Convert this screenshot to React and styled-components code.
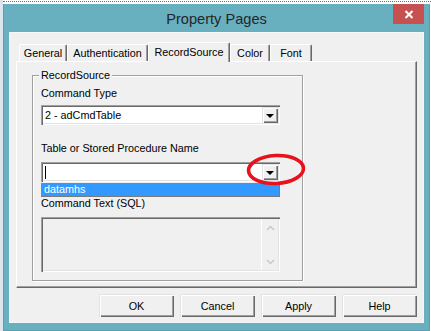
import React from "react";
import styled, { createGlobalStyle } from "styled-components";

const Global = createGlobalStyle`
  html, body { margin: 0; padding: 0; background: #fff; }
  body { font-family: "Liberation Sans", Arial, sans-serif; }
`;

const Page = styled.div`
  width: 431px;
  height: 331px;
  overflow: hidden;
  box-sizing: border-box;
  padding-top: 1px;
  background: linear-gradient(to right, #dde5ee 0, #dde5ee 3px, #fff 3px);
`;

const DottedRule = styled.div`
  height: 0;
  margin-left: 3px;
  border-top: 1px dotted #6d6d6d;
`;

const Window = styled.div`
  margin: 2px 0 0 3px;
  width: 427px;
  height: 327px;
  box-sizing: border-box;
  background: #68afbf;
  border: 1px solid #5c9fae;
  border-top: none;
  display: flex;
  flex-direction: column;
`;

const TitleBar = styled.div`
  height: 28px;
  display: grid;
  grid-template-columns: 1fr auto 1fr;
  align-items: start;
`;

const Title = styled.div`
  grid-column: 2;
  margin-top: 6px;
  font-size: 14.6px;
  line-height: 18px;
  color: #262626;
`;

const CloseButton = styled.div`
  grid-column: 3;
  justify-self: end;
  margin-right: 5px;
  width: 31px;
  height: 20px;
  background: #c75050;
  display: flex;
  align-items: center;
  justify-content: center;
`;

const Client = styled.div`
  margin: 0 5px 0 5px;
  height: 291px;
  box-sizing: border-box;
  background: #f0f0f0;
  border: 1px solid #f7f7f7;
  display: flex;
  flex-direction: column;
`;

const TabRow = styled.div`
  margin-top: 9px;
  padding-left: 9px;
  height: 19px;
  display: flex;
  align-items: flex-end;
  position: relative;
  z-index: 1;
`;

const Tab = styled.div`
  width: ${(p) => p.$w}px;
  height: ${(p) => (p.$active ? 20 : 17)}px;
  margin-bottom: ${(p) => (p.$active ? -1 : 0)}px;
  box-sizing: border-box;
  background: #f0f0f0;
  border-top: 1px solid #fff;
  border-left: 1px solid #fff;
  border-right: 1px solid #696969;
  box-shadow: inset -1px 0 0 #a0a0a0;
  border-radius: 2px 2px 0 0;
  font-size: 10.8px;
  color: #000;
  display: flex;
  align-items: center;
  justify-content: center;
  padding-bottom: ${(p) => (p.$active ? 2 : 0)}px;
`;

const Panel = styled.div`
  margin-left: 6px;
  width: 401px;
  height: 227px;
  box-sizing: border-box;
  border-top: 1px solid #fff;
  border-left: 1px solid #fff;
  border-right: 1px solid #696969;
  border-bottom: 1px solid #696969;
  box-shadow: inset -1px -1px 0 #a0a0a0;
  padding: 13px 0 0 15px;
`;

const GroupBox = styled.div`
  position: relative;
  width: 271px;
  height: 206px;
  box-sizing: border-box;
  border: 1px solid #a0a0a0;
  box-shadow: inset 1px 1px 0 #fff, 1px 1px 0 #fff;
  padding: 11px 0 0 8px;
`;

const Legend = styled.div`
  position: absolute;
  top: -7px;
  left: 6px;
  padding: 0 2px;
  background: #f0f0f0;
  font-size: 10.8px;
  line-height: 13px;
  color: #000;
`;

const Label = styled.div`
  margin-top: ${(p) => p.$mt || 0}px;
  font-size: 10.8px;
  line-height: 13px;
  height: 13px;
  color: #000;
  white-space: nowrap;
`;

const Combo = styled.div`
  position: relative;
  margin-top: ${(p) => p.$mt || 0}px;
  width: 239px;
  height: 20px;
  box-sizing: border-box;
  background: #fff;
  box-shadow: inset 1px 1px 0 #a0a0a0, inset 2px 2px 0 #696969,
    inset -1px -1px 0 #fff, inset -2px -2px 0 #e3e3e3;
  display: flex;
  align-items: center;
  padding: 2px 2px 2px 4px;
  font-size: 10.8px;
  color: #000;
`;

const ComboText = styled.div`
  flex: 1;
  line-height: 13px;
`;

const Caret = styled.div`
  width: 1px;
  height: 13px;
  background: #000;
`;

const DropButton = styled.div`
  width: 16px;
  height: 16px;
  box-sizing: border-box;
  background: #f0f0f0;
  box-shadow: inset 1px 1px 0 #e3e3e3, inset 2px 2px 0 #fff,
    inset -1px -1px 0 #696969, inset -2px -2px 0 #a0a0a0;
  display: flex;
  align-items: center;
  justify-content: center;
`;

const Arrow = styled.div`
  width: 0;
  height: 0;
  border-left: 4px solid transparent;
  border-right: 4px solid transparent;
  border-top: 4px solid #000;
  margin-top: 1px;
`;

const Highlight = styled.svg`
  position: absolute;
  left: 205px;
  top: -9px;
  width: 60px;
  height: 33px;
  overflow: visible;
  pointer-events: none;
`;

const DropList = styled.div`
  margin-top: 1px;
  width: 239px;
  height: 14px;
  box-sizing: border-box;
  background: #3399ff;
  border-right: 1px solid #7a7a7a;
  border-bottom: 1px solid #7a7a7a;
  color: #fff;
  font-size: 10.8px;
  line-height: 13px;
  padding-left: 3px;
`;

const TextArea = styled.div`
  margin-top: 7px;
  width: 239px;
  height: 55px;
  box-sizing: border-box;
  background: #f0f0f0;
  box-shadow: inset 1px 1px 0 #a0a0a0, inset 2px 2px 0 #696969,
    inset -1px -1px 0 #fff, inset -2px -2px 0 #e3e3e3;
  display: flex;
  justify-content: flex-end;
  padding: 2px;
`;

const ScrollBar = styled.div`
  width: 16px;
  border-left: 1px solid #fff;
  display: flex;
  flex-direction: column;
  justify-content: space-between;
  align-items: center;
  padding: 6px 0 5px;
`;

const ButtonRow = styled.div`
  margin-top: 6px;
  padding-right: 6px;
  display: flex;
  justify-content: flex-end;
  gap: 6px;
`;

const Button = styled.div`
  width: 75px;
  height: 23px;
  box-sizing: border-box;
  background: #f0f0f0;
  box-shadow: inset 1px 1px 0 #e3e3e3, inset 2px 2px 0 #fff,
    inset -1px -1px 0 #696969, inset -2px -2px 0 #a0a0a0;
  font-size: 10.8px;
  color: #000;
  display: flex;
  align-items: center;
  justify-content: center;
`;

const Chevron = ({ up }) => (
  <svg width="9" height="6" viewBox="0 0 9 6">
    <path
      d={up ? "M1 5 L4.5 1.5 L8 5" : "M1 1 L4.5 4.5 L8 1"}
      fill="none"
      stroke="#c8c8c8"
      strokeWidth="1.5"
    />
  </svg>
);

const tabs = [
  { label: "General", w: 48 },
  { label: "Authentication", w: 81 },
  { label: "RecordSource", w: 82, active: true },
  { label: "Color", w: 40 },
  { label: "Font", w: 42 },
];

export default function App() {
  return (
    <>
      <Global />
      <Page>
        <DottedRule />
        <Window>
          <TitleBar>
            <Title>Property Pages</Title>
            <CloseButton>
              <svg width="10" height="9" viewBox="0 0 10 9">
                <path d="M1.5 1 L8.5 8 M8.5 1 L1.5 8" stroke="#fff" strokeWidth="2" />
              </svg>
            </CloseButton>
          </TitleBar>
          <Client>
            <TabRow>
              {tabs.map((t) => (
                <Tab key={t.label} $w={t.w} $active={t.active}>
                  {t.label}
                </Tab>
              ))}
            </TabRow>
            <Panel>
              <GroupBox>
                <Legend>RecordSource</Legend>
                <Label>Command Type</Label>
                <Combo $mt={5}>
                  <ComboText>2 - adCmdTable</ComboText>
                  <DropButton>
                    <Arrow />
                  </DropButton>
                </Combo>
                <Label $mt={17}>Table or Stored Procedure Name</Label>
                <Combo $mt={7}>
                  <ComboText>
                    <Caret />
                  </ComboText>
                  <DropButton>
                    <Arrow />
                  </DropButton>
                  <Highlight viewBox="0 0 60 33">
                    <ellipse
                      cx="30"
                      cy="16.5"
                      rx="27.5"
                      ry="14"
                      fill="none"
                      stroke="#e8121c"
                      strokeWidth="3.6"
                      transform="rotate(-3 30 16.5)"
                    />
                  </Highlight>
                </Combo>
                <DropList>datamhs</DropList>
                <Label>Command Text (SQL)</Label>
                <TextArea>
                  <ScrollBar>
                    <Chevron up />
                    <Chevron />
                  </ScrollBar>
                </TextArea>
              </GroupBox>
            </Panel>
            <ButtonRow>
              <Button>OK</Button>
              <Button>Cancel</Button>
              <Button>Apply</Button>
              <Button>Help</Button>
            </ButtonRow>
          </Client>
        </Window>
      </Page>
    </>
  );
}
